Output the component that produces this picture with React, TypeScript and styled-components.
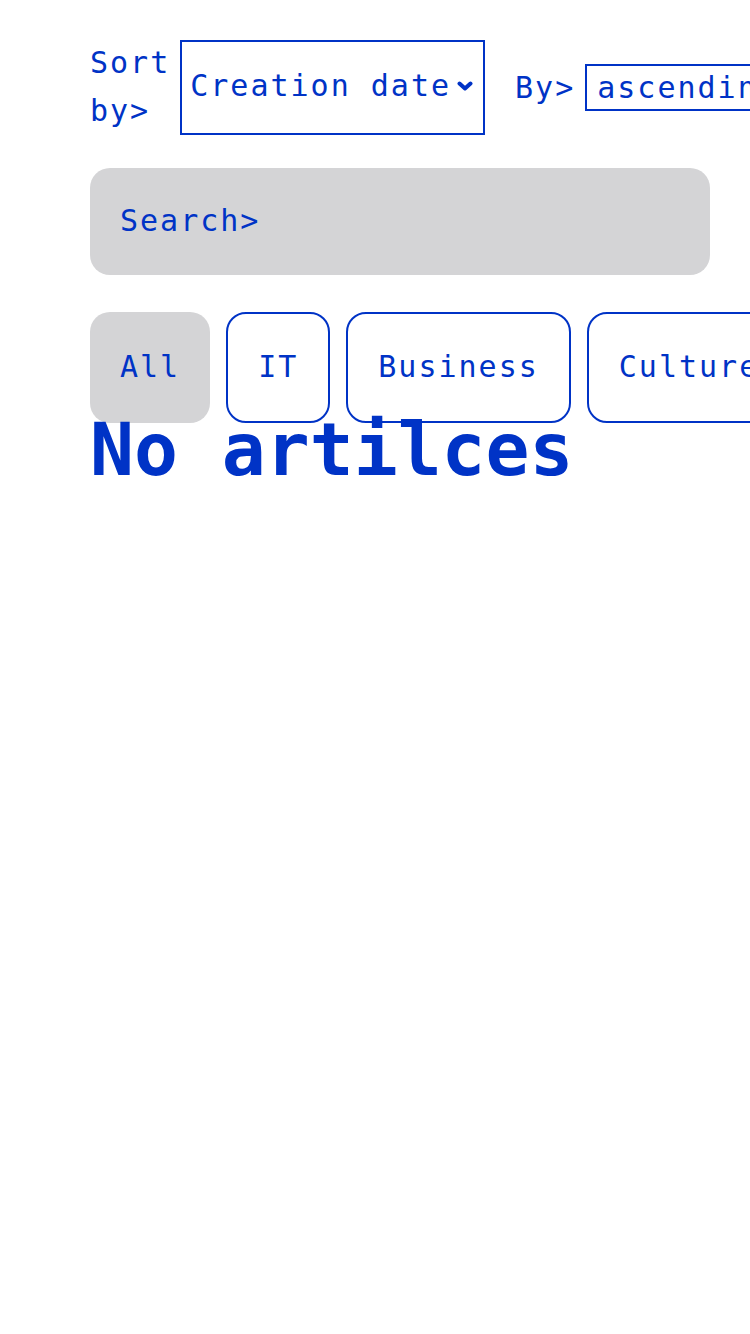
import styled, { createGlobalStyle } from "styled-components";

const BLUE = "#0033c6";
const GRAY = "#d4d4d6";

const categories = ["All", "IT", "Business", "Culture", "Science"];

const GlobalStyle = createGlobalStyle`
  html, body {
    margin: 0;
    padding: 0;
    overflow-x: hidden;
    background: #ffffff;
  }
  body {
    font-family: "DejaVu Sans Mono", "Liberation Mono", monospace;
    color: ${BLUE};
  }
`;

function Chevron() {
  return (
    <svg width="16" height="10" viewBox="0 0 16 10">
      <polyline
        points="2.5,2.5 8,7.5 13.5,2.5"
        fill="none"
        stroke={BLUE}
        strokeWidth="4"
        strokeLinecap="round"
        strokeLinejoin="round"
      />
    </svg>
  );
}

export default function App() {
  const active = "All";

  return (
    <Page>
      <GlobalStyle />
      <SortRow>
        <SortGroup>
          <Label $wrap>Sort by&gt;</Label>
          <Select $tall>
            <span>Creation date</span>
            <Chevron />
          </Select>
        </SortGroup>
        <ByGroup>
          <Label>By&gt;</Label>
          <Select>
            <span>ascending</span>
            <Chevron />
          </Select>
        </ByGroup>
      </SortRow>

      <SearchBox placeholder="Search>" />

      <ChipRow>
        {categories.map((cat) => (
          <Chip key={cat} $active={cat === active}>
            {cat}
          </Chip>
        ))}
      </ChipRow>

      <Empty>No artilces</Empty>
    </Page>
  );
}

const Page = styled.div`
  padding: 40px 0 0 90px;
  width: 100%;
  box-sizing: border-box;
  overflow: hidden;
  min-height: 1334px;
`;

const SortRow = styled.div`
  display: flex;
  align-items: center;
  gap: 30px;
  white-space: nowrap;
`;

const SortGroup = styled.div`
  display: flex;
  align-items: stretch;
  gap: 10px;
  flex-shrink: 0;
`;

const ByGroup = styled.div`
  display: flex;
  align-items: center;
  gap: 10px;
  flex-shrink: 0;
`;

const Label = styled.span<{ $wrap?: boolean }>`
  font-size: 30px;
  letter-spacing: 2px;
  line-height: 48px;
  white-space: ${(p) => (p.$wrap ? "normal" : "nowrap")};
  width: ${(p) => (p.$wrap ? "min-content" : "auto")};
  margin-top: ${(p) => (p.$wrap ? "-1px" : "0")};
`;

const Select = styled.div<{ $tall?: boolean }>`
  display: flex;
  align-items: center;
  gap: 6px;
  box-sizing: border-box;
  height: ${(p) => (p.$tall ? "auto" : "47px")};
  padding: ${(p) => (p.$tall ? "0 10px 4px 8px" : "0 10px")};
  border: 2px solid ${BLUE};
  font-size: 30px;
  letter-spacing: 2px;
  white-space: nowrap;
  flex-shrink: 0;
`;

const SearchBox = styled.input`
  display: block;
  box-sizing: border-box;
  width: 620px;
  height: 107px;
  margin-top: 33px;
  padding: 0 0 2px 30px;
  border: none;
  border-radius: 20px;
  background: ${GRAY};
  font-family: "DejaVu Sans Mono", "Liberation Mono", monospace;
  font-size: 30px;
  letter-spacing: 2px;
  color: ${BLUE};
  outline: none;

  &::placeholder {
    color: ${BLUE};
    opacity: 1;
  }
`;

const ChipRow = styled.div`
  display: flex;
  gap: 16px;
  margin-top: 37px;
  white-space: nowrap;
`;

const Chip = styled.div<{ $active?: boolean }>`
  display: flex;
  align-items: center;
  box-sizing: border-box;
  height: 111px;
  padding: 0 30px 2px 30px;
  flex-shrink: 0;
  border-radius: 20px;
  border: ${(p) => (p.$active ? "none" : `2px solid ${BLUE}`)};
  background: ${(p) => (p.$active ? GRAY : "transparent")};
  font-size: 30px;
  letter-spacing: 2px;
`;

const Empty = styled.h1`
  margin: -9px 0 0 0;
  font-size: 73px;
  font-weight: 700;
  line-height: 72px;
  letter-spacing: 0;
  white-space: nowrap;
`;
